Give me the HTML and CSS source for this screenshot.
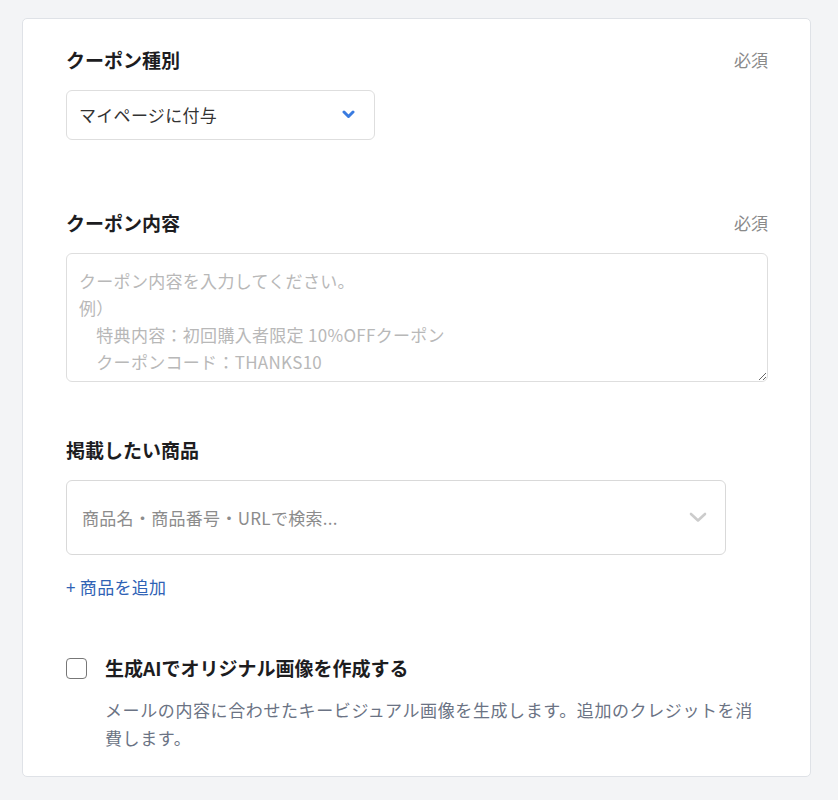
FILE: index.html
```html
<!DOCTYPE html>
<html lang="ja">
<head>
  <meta charset="UTF-8">
  <meta name="viewport" content="width=device-width, initial-scale=1.0">
  <title>クーポン設定</title>
  <link rel="stylesheet" href="styles.css">
</head>
<body>
  <div class="card">
    <!-- クーポン種別 -->
    <div class="field field-type">
      <div class="field-head">
        <span class="label">クーポン種別</span>
        <span class="required">必須</span>
      </div>
      <div class="select">
        <span>マイページに付与</span>
        <svg class="chevron-blue" width="13" height="9" viewBox="0 0 13 9">
          <path d="M2 2l4.5 4.5L11 2" fill="none" stroke="#3a7be0" stroke-width="3" stroke-linecap="round" stroke-linejoin="round"/>
        </svg>
      </div>
    </div>

    <!-- クーポン内容 -->
    <div class="field field-content">
      <div class="field-head">
        <span class="label">クーポン内容</span>
        <span class="required">必須</span>
      </div>
      <textarea class="textarea" placeholder="クーポン内容を入力してください。&#10;例）&#10;　特典内容：初回購入者限定 10%OFFクーポン&#10;　クーポンコード：THANKS10&#10;　有効期限：発行日から30日間"></textarea>
    </div>

    <!-- 掲載したい商品 -->
    <div class="field field-product">
      <div class="field-head">
        <span class="label">掲載したい商品</span>
      </div>
      <div class="search">
        <span>商品名・商品番号・URLで検索...</span>
        <svg width="18" height="11" viewBox="0 0 18 11">
          <path d="M2 2l7 6.5L16 2" fill="none" stroke="#cccccc" stroke-width="2.6" stroke-linecap="round" stroke-linejoin="round"/>
        </svg>
      </div>
      <a class="add-link" href="#">+ 商品を追加</a>
    </div>

    <!-- 生成AI -->
    <div class="ai">
      <label class="check-row">
        <span class="checkbox"></span>
        <span class="check-label">生成AIでオリジナル画像を作成する</span>
      </label>
      <p class="desc">メールの内容に合わせたキービジュアル画像を生成します。追加のクレジットを消費します。</p>
    </div>
  </div>
</body>
</html>
```

FILE: styles.css
```css
* {
  margin: 0;
  padding: 0;
  box-sizing: border-box;
  font-family: "Noto Sans CJK JP", "Noto Sans", sans-serif;
}
body {
  background-color: #f3f4f6;
  padding: 18px 0 0 22px;
  height: 800px;
}
.card {
  width: 789px;
  background-color: #fff;
  border: 1px solid #dfe2e7;
  border-radius: 5px;
  padding: 28px 42px 24px 43px;
}

/* 項目 */
.field-head {
  display: flex;
  justify-content: space-between;
  align-items: center;
  height: 26px;
  margin-bottom: 17px;
}
.label {
  font-size: 19px;
  line-height: 26px;
  font-weight: 700;
  color: #1d1d1f;
}
.required {
  font-size: 17px;
  line-height: 26px;
  color: #8a8a8a;
}
.field-type {
  margin-bottom: 70px;
}
.field-content {
  margin-bottom: 55px;
}
.field-product {
  margin-bottom: 55px;
}

/* セレクト */
.select {
  width: 309px;
  height: 50px;
  border: 1px solid #dedede;
  border-radius: 6px;
  display: flex;
  align-items: center;
  justify-content: space-between;
  padding: 0 19px 1px 12px;
  font-size: 17px;
  letter-spacing: 0.3px;
  color: #333;
}

/* テキストエリア */
.textarea {
  display: block;
  width: 100%;
  height: 129px;
  border: 1px solid #dedede;
  border-radius: 6px;
  padding: 13px 12px;
  font-size: 17px;
  line-height: 27px;
  letter-spacing: 0.3px;
  color: #333;
  resize: vertical;
  outline: none;
  overflow: hidden;
}
.textarea::placeholder {
  color: #b8b8b8;
}

/* 商品検索 */
.search {
  width: 660px;
  height: 75px;
  border: 1px solid #d9d9d9;
  border-radius: 6px;
  display: flex;
  align-items: center;
  justify-content: space-between;
  padding: 0 18px 0 15px;
  font-size: 17px;
  letter-spacing: 0.3px;
  color: #8c8c8c;
}
.add-link {
  display: inline-block;
  margin-top: 19px;
  font-size: 17px;
  line-height: 26px;
  letter-spacing: 0.3px;
  color: #2f62b5;
  text-decoration: none;
}

/* 生成AI */
.check-row {
  display: flex;
  align-items: center;
  gap: 18px;
  height: 26px;
}
.checkbox {
  width: 21px;
  height: 21px;
  border: 1.5px solid #777;
  border-radius: 4px;
  flex: none;
}
.check-label {
  font-size: 19px;
  line-height: 26px;
  font-weight: 700;
  color: #1d1d1f;
}
.desc {
  margin: 15px 0 0 39px;
  font-size: 17px;
  line-height: 28px;
  letter-spacing: 0.6px;
  color: #6b7384;
}
```
